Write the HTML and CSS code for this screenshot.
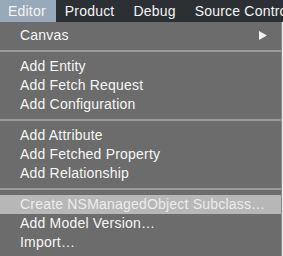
FILE: index.html
```html
<!DOCTYPE html>
<html>
<head>
<meta charset="utf-8">
<link rel="stylesheet" href="styles.css">
</head>
<body>
<div class="screen">
  <div class="menubar">
    <span class="mb-item active">Editor</span>
    <span class="mb-item">Product</span>
    <span class="mb-item">Debug</span>
    <span class="mb-item">Source Control</span>
  </div>
  <div class="below">
    <div class="menu">
      <div class="row">
        <span>Canvas</span>
        <svg class="arrow" width="8" height="9" viewBox="0 0 8 9"><path d="M0 0 L8 4.5 L0 9 Z" fill="#f2f2f2"/></svg>
      </div>
      <div class="sep"></div>
      <div class="row">Add Entity</div>
      <div class="row">Add Fetch Request</div>
      <div class="row">Add Configuration</div>
      <div class="sep"></div>
      <div class="row">Add Attribute</div>
      <div class="row">Add Fetched Property</div>
      <div class="row">Add Relationship</div>
      <div class="sep"></div>
      <div class="row hl">Create NSManagedObject Subclass…</div>
      <div class="row">Add Model Version…</div>
      <div class="row">Import…</div>
    </div>
    <div class="edge"></div>
  </div>
</div>
</body>
</html>
```
FILE: styles.css
```css
html, body {
  margin: 0;
  padding: 0;
}
body {
  width: 283px;
  height: 256px;
  overflow: hidden;
  background: #e9e9e9;
  font-family: "Liberation Sans", Arial, sans-serif;
  font-size: 14px;
  letter-spacing: 0.2px;
}
.screen {
  display: flex;
  flex-direction: column;
  height: 256px;
}
.menubar {
  height: 22px;
  background: #2c3034;
  display: flex;
  align-items: center;
  white-space: nowrap;
  overflow: hidden;
  color: #f4f4f4;
}
.mb-item {
  height: 22px;
  line-height: 22px;
  padding: 0 10px 0 9px;
}
.mb-item.active {
  padding-left: 8px;
  padding-right: 10px;
  background: #98a9ba;
}
.below {
  flex: 1;
  display: flex;
}
.menu {
  width: 281px;
  background: #6c6c6c;
  padding-top: 4px;
  color: #f6f6f6;
}
.row {
  height: 19px;
  line-height: 19px;
  padding-left: 20px;
  display: flex;
  align-items: center;
  white-space: nowrap;
}
.row .arrow {
  margin-left: auto;
  margin-right: 14px;
}
.row.hl {
  background: #b7b7b7;
  color: #ececec;
}
.sep {
  height: 12px;
  display: flex;
  align-items: center;
}
.sep::before {
  content: "";
  display: block;
  width: 100%;
  height: 2px;
  background: #9b9b9b;
}
.edge {
  flex: 1;
  background: #ececec;
  border-left: 1px solid #8a8a8a;
}
```
